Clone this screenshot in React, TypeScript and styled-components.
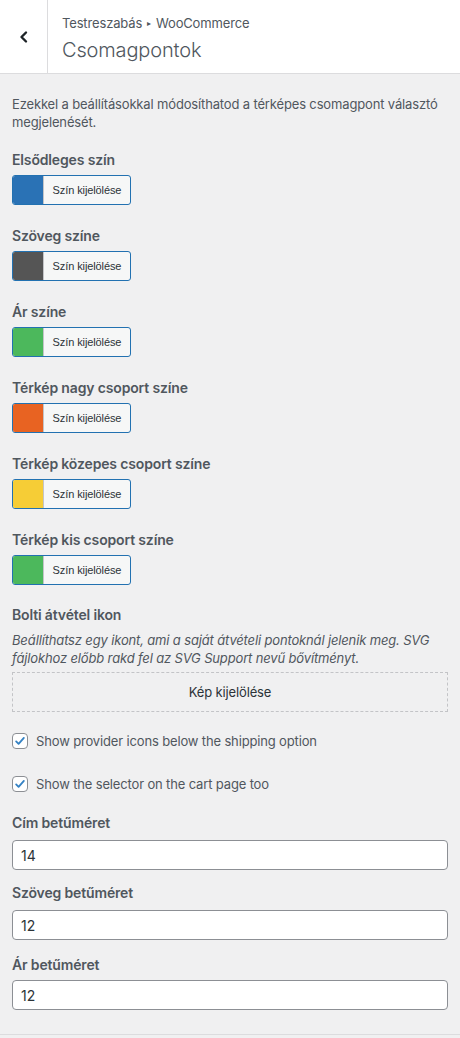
import { FC } from "react";
import styled, { createGlobalStyle } from "styled-components";

const GlobalStyle = createGlobalStyle`
  html, body {
    margin: 0;
    padding: 0;
    background: #f0f0f1;
  }
  body {
    font-family: Inter, "Noto Sans", "Liberation Sans", sans-serif;
    color: #50575e;
    letter-spacing: -0.15px;
    -webkit-font-smoothing: antialiased;
  }
`;

const Panel = styled.div`
  width: 460px;
  background: #f0f0f1;
  border-bottom: 1px solid #dcdcde;
`;

const Header = styled.div`
  display: flex;
  height: 74px;
  background: #fff;
  border-bottom: 1px solid #dcdcde;
  box-sizing: border-box;
`;

const BackButton = styled.button`
  width: 48px;
  flex: none;
  display: flex;
  align-items: center;
  justify-content: center;
  padding: 0;
  background: #fff;
  border: none;
  border-right: 1px solid #dcdcde;
  color: #1d2327;
  cursor: pointer;
`;

const HeaderText = styled.div`
  padding: 14px 14px 0 14px;
`;

const Crumb = styled.div`
  display: flex;
  align-items: center;
  font-size: 13px;
  line-height: 16px;
  color: #50575e;
`;

const Arrow = styled.span`
  font-size: 8px;
  margin: 1px 5px 0;
`;

const Title = styled.h2`
  margin: 6px 0 0;
  font-size: 20px;
  line-height: 26px;
  font-weight: 300;
  color: #50575e;
`;

const Body = styled.div`
  padding: 21px 12px 24px;
  display: flex;
  flex-direction: column;
`;

const Description = styled.p<{ italic?: boolean; top?: number }>`
  margin: ${({ top }) => top ?? 0}px 0 0;
  font-size: 13px;
  line-height: 18px;
  color: #50575e;
  font-style: ${({ italic }) => (italic ? "italic" : "normal")};
`;

const Control = styled.div<{ gap: number }>`
  margin-top: ${({ gap }) => gap}px;
  display: flex;
  flex-direction: column;
`;

const Label = styled.span`
  font-size: 14px;
  font-weight: 600;
  line-height: 20px;
  color: #50575e;
`;

const ColorButton = styled.button`
  display: flex;
  align-items: stretch;
  width: 119px;
  height: 30px;
  margin-top: 5px;
  padding: 0;
  border: 1px solid #2271b1;
  border-radius: 3px;
  background: #f6f7f7;
  overflow: hidden;
  cursor: pointer;
`;

const Swatch = styled.span<{ color: string }>`
  width: 30px;
  background: ${({ color }) => color};
  border-right: 1px solid #c3c4c7;
`;

const SwatchText = styled.span`
  flex: 1;
  display: flex;
  align-items: center;
  justify-content: center;
  font-family: inherit;
  font-size: 11px;
  letter-spacing: -0.1px;
  color: #2c3338;
`;

const UploadButton = styled.button`
  margin-top: 5px;
  height: 40px;
  width: 100%;
  border: 1px dashed #c3c4c7;
  border-radius: 0;
  background: transparent;
  font-family: inherit;
  font-size: 13px;
  letter-spacing: -0.15px;
  color: #2c3338;
  cursor: pointer;
`;

const CheckRow = styled.label<{ gap: number }>`
  display: flex;
  align-items: center;
  gap: 8px;
  margin-top: ${({ gap }) => gap}px;
  font-size: 13px;
  line-height: 20px;
  color: #50575e;
  cursor: pointer;
`;

const CheckBox = styled.span`
  width: 16px;
  height: 16px;
  flex: none;
  display: flex;
  align-items: center;
  justify-content: center;
  background: #fff;
  border: 1px solid #8c8f94;
  border-radius: 4px;
  box-sizing: border-box;
`;

const TextInput = styled.input<{ top: number }>`
  margin-top: ${({ top }) => top}px;
  width: 100%;
  height: 30px;
  box-sizing: border-box;
  padding: 0 8px;
  border: 1px solid #8c8f94;
  border-radius: 4px;
  background: #fff;
  font-family: inherit;
  font-size: 14px;
  color: #2c3338;
  outline: none;
`;

const colors = [
  { label: "Elsődleges szín", color: "#2a72b5" },
  { label: "Szöveg színe", color: "#555555" },
  { label: "Ár színe", color: "#4cb85c" },
  { label: "Térkép nagy csoport színe", color: "#e86322" },
  { label: "Térkép közepes csoport színe", color: "#f6cd36" },
  { label: "Térkép kis csoport színe", color: "#4cb85c" },
];

const sizes = [
  { label: "Cím betűméret", value: "14", gap: 19, top: 7 },
  { label: "Szöveg betűméret", value: "12", gap: 13, top: 7 },
  { label: "Ár betűméret", value: "12", gap: 15, top: 5 },
];

const Check: FC<{ text: string; gap: number }> = ({ text, gap }) => (
  <CheckRow gap={gap}>
    <CheckBox>
      <svg width="14" height="14" viewBox="0 0 20 20">
        <path
          d="M4.5 10.5l3.5 3.5 7.5-8.5"
          fill="none"
          stroke="#3582c4"
          strokeWidth="2.6"
          strokeLinecap="round"
          strokeLinejoin="round"
        />
      </svg>
    </CheckBox>
    {text}
  </CheckRow>
);

const App: FC = () => (
  <Panel>
    <GlobalStyle />
    <Header>
      <BackButton aria-label="Vissza">
        <svg width="12" height="14" viewBox="0 0 12 14">
          <path
            d="M8 2.5L3.5 7 8 11.5"
            fill="none"
            stroke="#1d2327"
            strokeWidth="2.4"
            strokeLinecap="round"
            strokeLinejoin="round"
          />
        </svg>
      </BackButton>
      <HeaderText>
        <Crumb>
          Testreszabás<Arrow>▸</Arrow>WooCommerce
        </Crumb>
        <Title>Csomagpontok</Title>
      </HeaderText>
    </Header>
    <Body>
      <Description>
        Ezekkel a beállításokkal módosíthatod a térképes csomagpont választó
        megjelenését.
      </Description>
      {colors.map((c, i) => (
        <Control key={c.label} gap={i === 0 ? 19 : 21}>
          <Label>{c.label}</Label>
          <ColorButton>
            <Swatch color={c.color} />
            <SwatchText>Szín kijelölése</SwatchText>
          </ColorButton>
        </Control>
      ))}
      <Control gap={20}>
        <Label>Bolti átvétel ikon</Label>
        <Description italic top={6}>
          Beállíthatsz egy ikont, ami a saját átvételi pontoknál jelenik meg. SVG
          fájlokhoz előbb rakd fel az SVG Support nevű bővítményt.
        </Description>
        <UploadButton>Kép kijelölése</UploadButton>
      </Control>
      <Check text="Show provider icons below the shipping option" gap={19} />
      <Check text="Show the selector on the cart page too" gap={23} />
      {sizes.map((s) => (
        <Control key={s.label} gap={s.gap}>
          <Label>{s.label}</Label>
          <TextInput top={s.top} defaultValue={s.value} />
        </Control>
      ))}
    </Body>
  </Panel>
);

export default App;
